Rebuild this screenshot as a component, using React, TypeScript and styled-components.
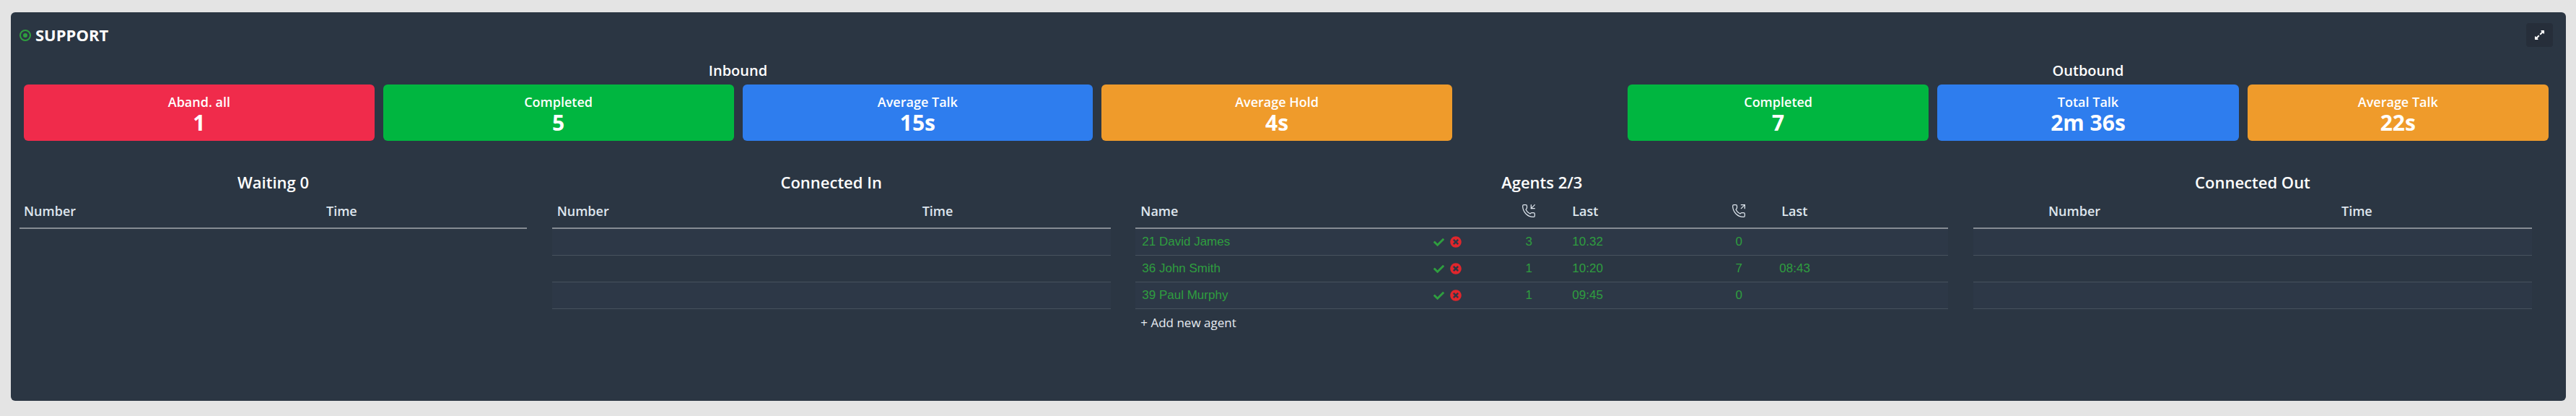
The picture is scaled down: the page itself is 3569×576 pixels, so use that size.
import React from 'react'
import styled, { createGlobalStyle } from 'styled-components'
import { FaCheck, FaExpandAlt, FaTimesCircle } from 'react-icons/fa'
import { PhoneIncoming, PhoneOutgoing } from 'lucide-react'

const GlobalStyle = createGlobalStyle`
    html, body {
        margin: 0;
        padding: 0;
        background: #e4e4e4;
        font-family: "Open Sans", "Liberation Sans", sans-serif;
    }
`;

const Page = styled.div`
    padding: 17px 14px 21px 15px;
`;

const Panel = styled.div`
    height: 538px;
    padding: 15px 18px 0 12px;
    box-sizing: border-box;
    background: #2b3643;
    border-radius: 6px;
    color: #fff;
`;

const TopBar = styled.div`
    display: flex;
    justify-content: space-between;
    height: 33px;
`;

const Title = styled.div`
    display: flex;
    align-items: center;
    gap: 6px;
    font-size: 22px;
    font-weight: 700;
    line-height: 33px;
`;

const StatusDot = () => (
    <svg width="16" height="16" viewBox="0 0 16 16">
        <circle cx="8" cy="8" r="7" fill="none" stroke="#2f9e3f" strokeWidth="2" />
        <circle cx="8" cy="8" r="3" fill="#2f9e3f" />
    </svg>
)

const ExpandButton = styled.div`
    display: flex;
    align-items: center;
    justify-content: center;
    width: 37px;
    height: 33px;
    background: #262e3a;
    border-radius: 4px;
    font-size: 15px;
`;

const Stats = styled.div`
    display: flex;
    justify-content: space-between;
    margin: 21px 6px 0 6px;
`;

const StatGroup = styled.div<{ $width: number }>`
    width: ${(p) => p.$width}px;
`;

const GroupLabel = styled.div`
    height: 31px;
    line-height: 24px;
    font-size: 20px;
    font-weight: 600;
    text-align: center;
`;

const Cards = styled.div`
    display: flex;
    gap: 12px;
`;

const Card = styled.div<{ $color: string }>`
    flex: 1;
    height: 78px;
    padding-top: 12px;
    box-sizing: border-box;
    background: ${(p) => p.$color};
    border-radius: 6px;
    text-align: center;
`;

const CardLabel = styled.div`
    font-size: 18px;
    font-weight: 600;
    line-height: 24px;
`;

const CardValue = styled.div`
    font-size: 30px;
    font-weight: 700;
    line-height: 34px;
`;

const Sections = styled.div`
    display: flex;
    justify-content: space-between;
    margin: 40px 29px 0 0;
`;

const Section = styled.div<{ $width: number }>`
    width: ${(p) => p.$width}px;
`;

const SectionTitle = styled.div`
    font-size: 22px;
    font-weight: 600;
    line-height: 34px;
    text-align: center;
`;

const Table = styled.table`
    width: 100%;
    border-collapse: collapse;
    table-layout: fixed;
`;

const HeadCell = styled.th<{ $width?: number; $inset?: number; $center?: boolean }>`
    height: 47px;
    padding: 0 0 0 ${(p) => p.$inset ?? 0}px;
    box-sizing: border-box;
    width: ${(p) => (p.$width ? `${p.$width}px` : 'auto')};
    border-bottom: 2px solid #868c93;
    color: #dfe6ee;
    font-size: 18px;
    font-weight: 600;
    text-align: ${(p) => (p.$center ? 'center' : 'left')};
    & > svg {
        display: inline-block;
        vertical-align: middle;
        margin-bottom: 3px;
    }
`;

const Row = styled.tr<{ $striped?: boolean }>`
    background: ${(p) => (p.$striped ? '#2d3847' : 'transparent')};
`;

const Cell = styled.td<{ $inset?: number; $center?: boolean }>`
    height: 37px;
    padding: 0 0 0 ${(p) => p.$inset ?? 0}px;
    box-sizing: border-box;
    border-bottom: 1px solid #47525e;
    color: #2f9e3f;
    font-family: "Liberation Sans", Arial, sans-serif;
    font-size: 17px;
    text-align: ${(p) => (p.$center ? 'center' : 'left')};
`;

const Actions = styled.span`
    display: inline-flex;
    align-items: center;
    gap: 8px;
    vertical-align: middle;
`;

const Check = styled(FaCheck)`
    color: #2f9e3f;
    font-size: 15px;
`;

const Remove = styled(FaTimesCircle)`
    color: #e0262c;
    font-size: 16px;
`;

const AddAgent = styled.div`
    padding-left: 7px;
    height: 37px;
    line-height: 37px;
    color: #e6ebf1;
    font-size: 17px;
`;

const inbound = [
    { label: 'Aband. all', value: '1', color: '#f02b4b' },
    { label: 'Completed', value: '5', color: '#00b640' },
    { label: 'Average Talk', value: '15s', color: '#2e7dee' },
    { label: 'Average Hold', value: '4s', color: '#ef9b2b' },
]

const outbound = [
    { label: 'Completed', value: '7', color: '#00b640' },
    { label: 'Total Talk', value: '2m 36s', color: '#2e7dee' },
    { label: 'Average Talk', value: '22s', color: '#ef9b2b' },
]

const agents = [
    { name: '21 David James', inCalls: 3, inLast: '10.32', outCalls: 0, outLast: '' },
    { name: '36 John Smith', inCalls: 1, inLast: '10:20', outCalls: 7, outLast: '08:43' },
    { name: '39 Paul Murphy', inCalls: 1, inLast: '09:45', outCalls: 0, outLast: '' },
]

type CallProps = {
    title: string
    width: number
    numberInset: number
    timeAt: number
    rows: number
}

const CallTable = ({ title, width, numberInset, timeAt, rows }: CallProps) => (
    <Section $width={width}>
        <SectionTitle>{title}</SectionTitle>
        <Table>
            <thead>
                <tr>
                    <HeadCell $width={timeAt} $inset={numberInset}>Number</HeadCell>
                    <HeadCell>Time</HeadCell>
                </tr>
            </thead>
            <tbody>
                {Array.from({ length: rows }, (_, i) => (
                    <Row key={i} $striped={i % 2 === 0}>
                        <Cell />
                        <Cell />
                    </Row>
                ))}
            </tbody>
        </Table>
    </Section>
)

const App = () => {
    return (
        <Page>
            <GlobalStyle />
            <Panel>
                <TopBar>
                    <Title><StatusDot />SUPPORT</Title>
                    <ExpandButton><FaExpandAlt /></ExpandButton>
                </TopBar>
                <Stats>
                    <StatGroup $width={1979}>
                        <GroupLabel>Inbound</GroupLabel>
                        <Cards>
                            {inbound.map((c) => (
                                <Card key={c.label} $color={c.color}>
                                    <CardLabel>{c.label}</CardLabel>
                                    <CardValue>{c.value}</CardValue>
                                </Card>
                            ))}
                        </Cards>
                    </StatGroup>
                    <StatGroup $width={1276}>
                        <GroupLabel>Outbound</GroupLabel>
                        <Cards>
                            {outbound.map((c) => (
                                <Card key={c.label} $color={c.color}>
                                    <CardLabel>{c.label}</CardLabel>
                                    <CardValue>{c.value}</CardValue>
                                </Card>
                            ))}
                        </Cards>
                    </StatGroup>
                </Stats>
                <Sections>
                    <CallTable title="Waiting 0" width={703} numberInset={6} timeAt={425} rows={0} />
                    <CallTable title="Connected In" width={774} numberInset={7} timeAt={513} rows={3} />
                    <Section $width={1126}>
                        <SectionTitle>Agents 2/3</SectionTitle>
                        <Table>
                            <thead>
                                <tr>
                                    <HeadCell $width={396} $inset={7}>Name</HeadCell>
                                    <HeadCell $width={124} />
                                    <HeadCell $width={50} $center><PhoneIncoming size={20} strokeWidth={1.5} /></HeadCell>
                                    <HeadCell $width={241} $inset={35}>Last</HeadCell>
                                    <HeadCell $width={50} $center><PhoneOutgoing size={20} strokeWidth={1.5} /></HeadCell>
                                    <HeadCell $inset={34}>Last</HeadCell>
                                </tr>
                            </thead>
                            <tbody>
                                {agents.map((a, i) => (
                                    <Row key={a.name} $striped={i % 2 === 0}>
                                        <Cell $inset={9}>{a.name}</Cell>
                                        <Cell $inset={17}>
                                            <Actions><Check /><Remove /></Actions>
                                        </Cell>
                                        <Cell $center>{a.inCalls}</Cell>
                                        <Cell $inset={35}>{a.inLast}</Cell>
                                        <Cell $center>{a.outCalls}</Cell>
                                        <Cell $inset={31}>{a.outLast}</Cell>
                                    </Row>
                                ))}
                            </tbody>
                        </Table>
                        <AddAgent>+ Add new agent</AddAgent>
                    </Section>
                    <CallTable title="Connected Out" width={774} numberInset={104} timeAt={510} rows={3} />
                </Sections>
            </Panel>
        </Page>
    )
}

export default App
